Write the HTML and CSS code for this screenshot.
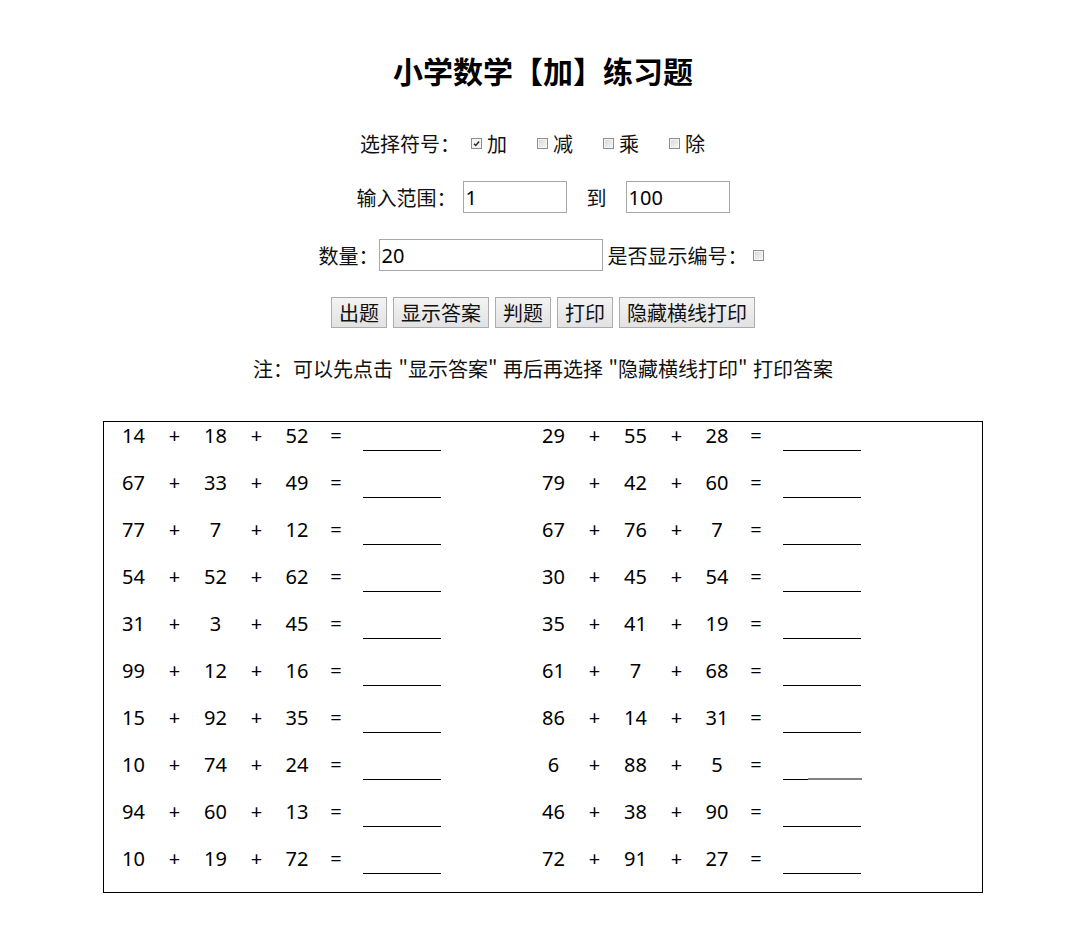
FILE: index.html
```html
<!DOCTYPE html>
<html lang="zh-CN">
<head>
<meta charset="utf-8">
<title>小学数学练习题</title>
<link rel="stylesheet" href="styles.css">
</head>
<body>
<div class="page">
  <h1 class="title">小学数学【加】练习题</h1>

  <div class="row opts">
    <span class="lbl">选择符号：</span>
    <label class="opt"><span class="cb checked"><svg viewBox="0 0 10 10" width="10" height="10"><path d="M2.2 5.2 L4.2 7.2 L7.9 2.8" stroke="#2a2a2a" stroke-width="1.7" fill="none"/></svg></span>加</label>
    <label class="opt"><span class="cb"></span>减</label>
    <label class="opt"><span class="cb"></span>乘</label>
    <label class="opt last"><span class="cb"></span>除</label>
  </div>

  <div class="row range">
    <span class="lbl">输入范围：</span>
    <input class="field short" type="text" value="1">
    <span class="to">到</span>
    <input class="field short" type="text" value="100">
  </div>

  <div class="row count">
    <span class="lbl">数量：</span>
    <input class="field long" type="text" value="20">
    <span class="lbl show">是否显示编号：</span>
    <span class="cb"></span>
  </div>

  <div class="row btns">
    <button class="btn">出题</button>
    <button class="btn">显示答案</button>
    <button class="btn">判题</button>
    <button class="btn">打印</button>
    <button class="btn">隐藏横线打印</button>
  </div>

  <div class="row note">注：可以先点击 "显示答案" 再后再选择 "隐藏横线打印" 打印答案</div>

  <div class="sheet">
    <div class="prob"><span>14</span><span>+</span><span>18</span><span>+</span><span>52</span><span>=</span><span class="blank"></span></div>
    <div class="prob"><span>29</span><span>+</span><span>55</span><span>+</span><span>28</span><span>=</span><span class="blank"></span></div>
    <div class="prob"><span>67</span><span>+</span><span>33</span><span>+</span><span>49</span><span>=</span><span class="blank"></span></div>
    <div class="prob"><span>79</span><span>+</span><span>42</span><span>+</span><span>60</span><span>=</span><span class="blank"></span></div>
    <div class="prob"><span>77</span><span>+</span><span>7</span><span>+</span><span>12</span><span>=</span><span class="blank"></span></div>
    <div class="prob"><span>67</span><span>+</span><span>76</span><span>+</span><span>7</span><span>=</span><span class="blank"></span></div>
    <div class="prob"><span>54</span><span>+</span><span>52</span><span>+</span><span>62</span><span>=</span><span class="blank"></span></div>
    <div class="prob"><span>30</span><span>+</span><span>45</span><span>+</span><span>54</span><span>=</span><span class="blank"></span></div>
    <div class="prob"><span>31</span><span>+</span><span>3</span><span>+</span><span>45</span><span>=</span><span class="blank"></span></div>
    <div class="prob"><span>35</span><span>+</span><span>41</span><span>+</span><span>19</span><span>=</span><span class="blank"></span></div>
    <div class="prob"><span>99</span><span>+</span><span>12</span><span>+</span><span>16</span><span>=</span><span class="blank"></span></div>
    <div class="prob"><span>61</span><span>+</span><span>7</span><span>+</span><span>68</span><span>=</span><span class="blank"></span></div>
    <div class="prob"><span>15</span><span>+</span><span>92</span><span>+</span><span>35</span><span>=</span><span class="blank"></span></div>
    <div class="prob"><span>86</span><span>+</span><span>14</span><span>+</span><span>31</span><span>=</span><span class="blank"></span></div>
    <div class="prob"><span>10</span><span>+</span><span>74</span><span>+</span><span>24</span><span>=</span><span class="blank"></span></div>
    <div class="prob"><span>6</span><span>+</span><span>88</span><span>+</span><span>5</span><span>=</span><span class="blank smudge"></span></div>
    <div class="prob"><span>94</span><span>+</span><span>60</span><span>+</span><span>13</span><span>=</span><span class="blank"></span></div>
    <div class="prob"><span>46</span><span>+</span><span>38</span><span>+</span><span>90</span><span>=</span><span class="blank"></span></div>
    <div class="prob"><span>10</span><span>+</span><span>19</span><span>+</span><span>72</span><span>=</span><span class="blank"></span></div>
    <div class="prob"><span>72</span><span>+</span><span>91</span><span>+</span><span>27</span><span>=</span><span class="blank"></span></div>
  </div>
</div>
</body>
</html>
```
FILE: styles.css
```css
html, body {
  margin: 0;
  padding: 0;
  background: #fff;
}

body {
  font-family: "Noto Sans CJK SC", "Noto Sans", sans-serif;
  font-size: 20px;
  color: #111;
}

.page {
  padding-left: 3px;
}

.title {
  margin: 0;
  padding-top: 50px;
  height: 40px;
  line-height: 40px;
  font-size: 30px;
  font-weight: bold;
  color: #000;
  text-align: center;
}

.row {
  display: flex;
  justify-content: center;
  align-items: center;
  white-space: nowrap;
}

.opts {
  height: 32px;
  margin-top: 37px;
  padding-right: 21px;
}

.opts .lbl {
  margin-right: 11px;
}

.opt {
  display: flex;
  align-items: center;
  margin-right: 30px;
}

.opt.last {
  margin-right: 0;
}

.opt .cb {
  margin-right: 5px;
}

.cb {
  display: inline-flex;
  align-items: center;
  justify-content: center;
  width: 9px;
  height: 9px;
  border: 1px solid #8e8e8e;
  background: linear-gradient(135deg, #d6d6d6 0%, #e9e9e9 55%, #f6f6f6 100%);
  box-shadow: inset 0 0 0 1px #f4f4f4;
}

.cb.checked {
  background: #f4f4f4;
}

.cb svg {
  display: block;
  width: 9px;
  height: 9px;
}

.range {
  height: 32px;
  margin-top: 22px;
  padding-left: 0;
}

.range .lbl {
  margin-right: 6px;
}

.to {
  margin: 0 19px 0 20px;
}

.field {
  box-sizing: border-box;
  height: 32px;
  padding: 0 2px;
  border: 1px solid #a6a6a6;
  font-family: "Noto Sans", "Noto Sans CJK SC", sans-serif;
  font-size: 20px;
  color: #000;
  background: #fff;
  outline: none;
}

.field.short {
  width: 104px;
}

.field.long {
  width: 224px;
}

.count {
  height: 32px;
  margin-top: 26px;
  padding-right: 4px;
}

.count .show {
  margin: 0 5px;
}

.btns {
  height: 31px;
  margin-top: 26px;
  gap: 6px;
}

.btn {
  box-sizing: border-box;
  height: 31px;
  padding: 0 7px;
  border: 1px solid #acacac;
  border-radius: 0;
  background: linear-gradient(#f3f3f3, #ebebeb 50%, #e2e2e2);
  font-family: "Noto Sans CJK SC", sans-serif;
  font-size: 20px;
  line-height: 29px;
  color: #111;
}

.note {
  height: 32px;
  margin-top: 24px;
  word-spacing: 1px;
}

.sheet {
  box-sizing: border-box;
  width: 880px;
  margin: 37px auto 0;
  border: 1px solid #000;
  padding-left: 9px;
  display: grid;
  grid-template-columns: 420px 420px;
}

.prob {
  display: grid;
  grid-template-columns: 41px 41px 41px 41px 40px 38px 86px;
  height: 47px;
  font-family: "Noto Sans", "Noto Sans CJK SC", sans-serif;
  font-size: 20px;
  color: #000;
}

.prob span {
  line-height: 28px;
  height: 28px;
  text-align: center;
}

.prob .blank {
  position: relative;
  margin-left: 8px;
  width: 78px;
  border-bottom: 1px solid #000;
}

.smudge::after {
  content: "";
  position: absolute;
  left: 25px;
  top: 27px;
  width: 54px;
  height: 2px;
  background: #808080;
}
```
